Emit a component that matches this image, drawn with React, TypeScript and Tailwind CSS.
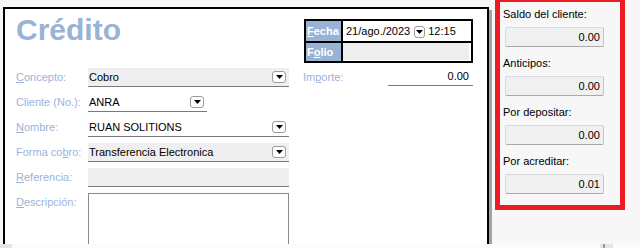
import React from 'react'

const DropBtn = ({ w = 'w-[14px]' }: { w?: string }) => (
    <span className={`inline-flex ${w} h-[12px] items-center justify-center rounded-[3px] border border-[#9c9c9c] bg-white shrink-0`}>
        <svg width="7" height="4" viewBox="0 0 7 4">
            <path d="M0 0 H7 L3.5 4 Z" fill="#000" />
        </svg>
    </span>
)

const Label = ({ children }: { children: React.ReactNode }) => (
    <span className="w-[72px] shrink-0 text-[#9db2d9]">{children}</span>
)

const SideField = ({ label, value, first }: { label: string; value: string; first?: boolean }) => (
    <div className={first ? 'pt-[5px]' : 'mt-[9px]'}>
        <div className="h-[14px] leading-[14px] text-black">{label}</div>
        <div className="mt-[6px] ml-[2px] w-[99px] h-[20px] rounded-[2px] border border-[#dadada] border-b-[#a9a9a9] border-r-[#c4c4c4] bg-[#f0f0f0] pr-[3px] text-right leading-[18px] text-black">
            {value}
        </div>
    </div>
)

export default function App() {
    return (
        <div className="flex h-[248px] w-[640px] flex-col overflow-hidden bg-[#f7f7f7] text-[11px] font-['Liberation_Sans',Arial,sans-serif]">
            <div className="flex h-[244px]">
                {/* main form panel */}
                <div className="flex pl-[3px] pt-[7px]">
                    <div className="h-[237px] w-[486px] border-2 border-b-0 border-black bg-white pl-[11px] pr-[14px] pt-[4px]">
                        <div className="flex items-start justify-between">
                            <h1 className="text-[30px] font-bold leading-[34px] text-[#98b3d6]">Crédito</h1>
                            <div className="mt-[6px] grid w-[169px] grid-cols-[35px_1fr] grid-rows-[20px_18px] gap-[2px] border-2 border-black bg-black">
                                <div className="bg-[#98b3d6] pl-[1px] font-bold leading-[20px] text-white">
                                    <u>F</u>echa
                                </div>
                                <div className="flex items-center bg-white pl-[3px] text-black">
                                    <span>21/ago./2023</span>
                                    <span className="ml-[4px] mt-[-2px]">
                                        <DropBtn w="w-[11px]" />
                                    </span>
                                    <span className="ml-[3px]">12:15</span>
                                </div>
                                <div className="bg-[#98b3d6] pl-[1px] font-bold leading-[18px] text-white">
                                    F<u>o</u>lio
                                </div>
                                <div className="bg-white pr-[2px]">
                                    <div className="h-[17px] bg-[#efefef]" />
                                </div>
                            </div>
                        </div>

                        <div className="mt-[5px] flex items-start">
                            <div className="flex w-[273px] flex-col gap-[6px]">
                                <div className="flex h-[19px] items-center">
                                    <Label><u>C</u>oncepto:</Label>
                                    <div className="flex h-[19px] flex-1 items-center justify-between border-b border-[#7a7a7a] bg-[#efefef] pl-[1px] pr-[3px] text-black">
                                        <span>Cobro</span>
                                        <DropBtn />
                                    </div>
                                </div>
                                <div className="flex h-[19px] items-center">
                                    <Label>Cliente (No.):</Label>
                                    <div className="flex h-[19px] w-[119px] items-center justify-between border-b border-[#7a7a7a] bg-white pl-[1px] pr-[3px] text-black">
                                        <span>ANRA</span>
                                        <DropBtn />
                                    </div>
                                </div>
                                <div className="flex h-[19px] items-center">
                                    <Label><u>N</u>ombre:</Label>
                                    <div className="flex h-[19px] flex-1 items-center justify-between border-b border-[#7a7a7a] bg-white pl-[1px] pr-[3px] text-black">
                                        <span>RUAN SOLITIONS</span>
                                        <DropBtn />
                                    </div>
                                </div>
                                <div className="flex h-[19px] items-center">
                                    <Label>Forma co<u>b</u>ro:</Label>
                                    <div className="flex h-[19px] flex-1 items-center justify-between border-b border-[#7a7a7a] bg-[#efefef] pl-[1px] pr-[3px] text-black">
                                        <span>Transferencia Electronica</span>
                                        <DropBtn />
                                    </div>
                                </div>
                                <div className="flex h-[19px] items-center">
                                    <Label><u>R</u>eferencia:</Label>
                                    <div className="h-[19px] flex-1 border-b border-[#7a7a7a] bg-[#efefef]" />
                                </div>
                                <div className="flex items-start">
                                    <span className="mt-[3px] w-[72px] shrink-0 leading-[13px] text-[#9db2d9]">
                                        <u>D</u>escripción:
                                    </span>
                                    <div className="h-[52px] flex-1 border border-b-0 border-[#8a8a8a] bg-white" />
                                </div>
                            </div>

                            <div className="ml-[14px] flex h-[18px] w-[170px] items-center">
                                <span className="flex-1 text-[#9db2d9]">
                                    Im<u>p</u>orte:
                                </span>
                                <div className="h-[18px] w-[85px] border-b border-[#7a7a7a] pr-[4px] text-right leading-[17px] text-black">
                                    0.00
                                </div>
                            </div>
                        </div>
                    </div>
                    <div className="mt-[3px] w-[3px] bg-[#a3a3a3]" />
                </div>

                {/* totals side panel */}
                <div className="ml-[3px] mt-[-3px]">
                    <div className="h-[213px] w-[130px] border-[5px] border-[#ed1c24] pl-[3px]">
                        <SideField label="Saldo del cliente:" value="0.00" first />
                        <SideField label="Anticipos:" value="0.00" />
                        <SideField label="Por depositar:" value="0.00" />
                        <SideField label="Por acreditar:" value="0.01" />
                    </div>
                </div>
            </div>

            <div className="flex h-[4px] bg-[#fbfbfb]">
                <div className="w-[12px] bg-[#e4e4e4]" />
                <div className="ml-[588px] flex w-[13px] bg-[#e4e4e4]">
                    <div className="ml-[3px] w-[2px] bg-[#9a9a9a]" />
                </div>
            </div>
        </div>
    )
}
